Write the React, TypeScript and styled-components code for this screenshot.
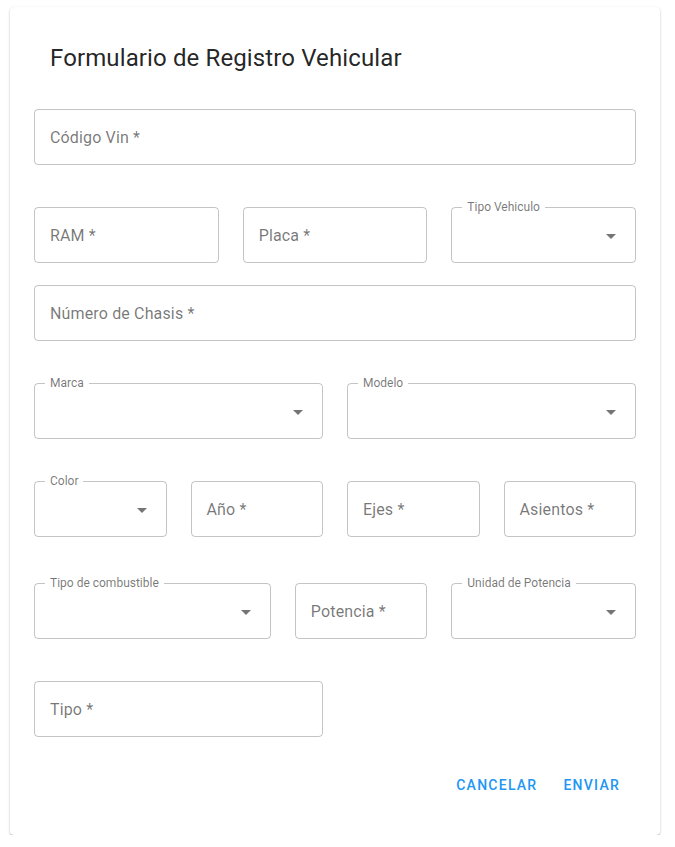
import React from "react";
import styled, { createGlobalStyle } from "styled-components";

const Global = createGlobalStyle`
  html, body { margin: 0; padding: 0; background: #fff; }
  body { font-family: Roboto, "Noto Sans", Arial, sans-serif; }
  * { box-sizing: border-box; }
`;

const Card = styled.div`
  width: 650px;
  height: 828px;
  margin: 7px 0 0 10px;
  background: #fff;
  border-radius: 4px;
  box-shadow: 0 2px 1px -1px rgba(0,0,0,0.2), 0 1px 2px 0 rgba(0,0,0,0.16), 0 1px 3px 0 rgba(0,0,0,0.12);
  display: flex;
  flex-direction: column;
  padding: 0 24px;
`;

const Title = styled.h2`
  margin: 35px 0 0 16px;
  font-size: 24px;
  line-height: 32px;
  font-weight: 400;
  color: rgba(0,0,0,0.87);
  letter-spacing: 0.12px;
`;

const Row = styled.div<{ $top: number }>`
  display: grid;
  grid-template-columns: repeat(12, 1fr);
  column-gap: 24px;
  margin-top: ${(p) => p.$top}px;
`;

const FieldBox = styled.div<{ $span: number }>`
  grid-column: span ${(p) => p.$span};
  position: relative;
  height: 56px;
  border: 1px solid rgba(0,0,0,0.23);
  border-radius: 4px;
  display: flex;
  align-items: center;
  padding: 0 15px;
`;

const Placeholder = styled.span`
  font-size: 16px;
  color: rgba(0,0,0,0.54);
  letter-spacing: 0.00938em;
`;

const Notch = styled.span`
  position: absolute;
  top: -8px;
  left: 10px;
  padding: 0 5px;
  background: #fff;
  font-size: 12px;
  line-height: 14px;
  color: rgba(0,0,0,0.54);
`;

const Arrow = styled.svg`
  position: absolute;
  right: 12px;
  top: 16px;
  width: 24px;
  height: 24px;
  fill: rgba(0,0,0,0.54);
`;

const Actions = styled.div`
  margin-top: auto;
  margin-bottom: 32px;
  margin-right: 8px;
  display: flex;
  justify-content: flex-end;
  gap: 10px;
`;

const TextButton = styled.button`
  height: 36px;
  padding: 6px 8px;
  border: none;
  background: transparent;
  font-family: Roboto, Arial, sans-serif;
  font-size: 14px;
  font-weight: 500;
  letter-spacing: 1.25px;
  text-transform: uppercase;
  color: #2196f3;
  cursor: pointer;
`;

function TextField({ span, label }: { span: number; label: string }) {
  return (
    <FieldBox $span={span}>
      <Placeholder>{label}</Placeholder>
    </FieldBox>
  );
}

function SelectField({ span, label }: { span: number; label: string }) {
  return (
    <FieldBox $span={span}>
      <Notch>{label}</Notch>
      <Arrow viewBox="0 0 24 24">
        <path d="M7 10l5 5 5-5z" />
      </Arrow>
    </FieldBox>
  );
}

export default function App() {
  return (
    <>
      <Global />
      <Card>
        <Title>Formulario de Registro Vehicular</Title>
        <Row $top={35}>
          <TextField span={12} label="Código Vin *" />
        </Row>
        <Row $top={42}>
          <TextField span={4} label="RAM *" />
          <TextField span={4} label="Placa *" />
          <SelectField span={4} label="Tipo Vehiculo" />
        </Row>
        <Row $top={22}>
          <TextField span={12} label="Número de Chasis *" />
        </Row>
        <Row $top={42}>
          <SelectField span={6} label="Marca" />
          <SelectField span={6} label="Modelo" />
        </Row>
        <Row $top={42}>
          <SelectField span={3} label="Color" />
          <TextField span={3} label="Año *" />
          <TextField span={3} label="Ejes *" />
          <TextField span={3} label="Asientos *" />
        </Row>
        <Row $top={46}>
          <SelectField span={5} label="Tipo de combustible" />
          <TextField span={3} label="Potencia *" />
          <SelectField span={4} label="Unidad de Potencia" />
        </Row>
        <Row $top={42}>
          <TextField span={6} label="Tipo *" />
        </Row>
        <Actions>
          <TextButton>Cancelar</TextButton>
          <TextButton>Enviar</TextButton>
        </Actions>
      </Card>
    </>
  );
}
